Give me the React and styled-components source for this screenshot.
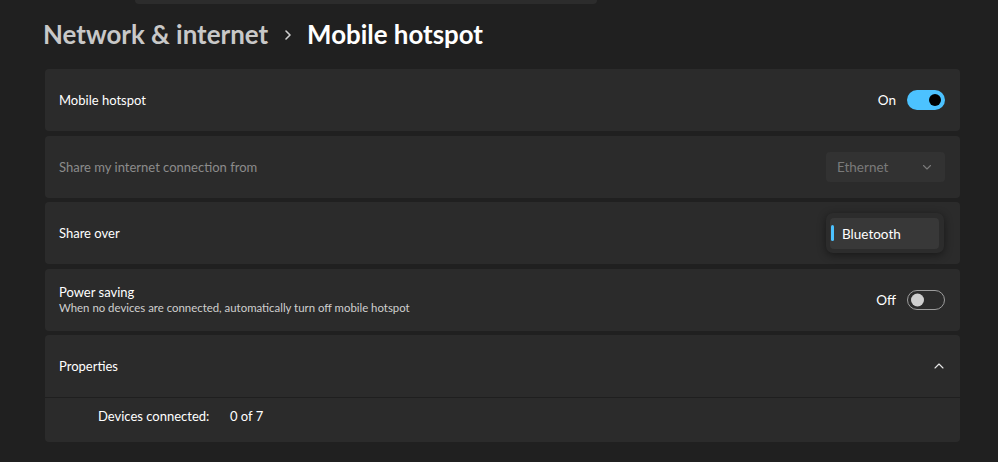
import styled, { createGlobalStyle } from "styled-components";

const GlobalStyle = createGlobalStyle`
  html, body {
    margin: 0;
    padding: 0;
    background: #202020;
  }
  body {
    font-family: Lato, "Noto Sans", sans-serif;
    color: #ffffff;
    -webkit-font-smoothing: antialiased;
  }
`;

const Page = styled.div`
  width: 998px;
  height: 462px;
  overflow: hidden;
  background: #202020;
`;

const SearchStub = styled.div`
  margin-left: 135px;
  width: 462px;
  height: 4px;
  background: #2c2c2c;
  border-radius: 0 0 6px 6px;
`;

const Breadcrumb = styled.h1`
  display: flex;
  align-items: center;
  gap: 14px;
  margin: 0;
  padding: 10px 0 0 43px;
  height: 40px;
  font-size: 25.9px;
  font-weight: 700;
`;

const Crumb = styled.span`
  color: ${(p) => (p.$current ? "#ffffff" : "#c8c8c8")};
`;

const Sep = styled.span`
  display: flex;
  align-items: center;
  margin: 2px 0 0 1px;
`;

const Cards = styled.div`
  display: flex;
  flex-direction: column;
  gap: 4.5px;
  width: 915px;
  margin: 15px 0 0 45px;
`;

const Card = styled.div`
  background: #2b2b2b;
  border-radius: 4px;
`;

const Row = styled.div`
  display: flex;
  align-items: center;
  justify-content: space-between;
  height: 62px;
  padding: 0 15px 0 14px;
  box-sizing: border-box;
`;

const Label = styled.div`
  display: flex;
  flex-direction: column;
  font-size: 13px;
  line-height: 16px;
  color: ${(p) => (p.$disabled ? "#8c8c8c" : "#ffffff")};
`;

const Sub = styled.span`
  font-size: 11.4px;
  line-height: 15px;
  color: #cfcfcf;
`;

const Control = styled.div`
  display: flex;
  align-items: center;
  gap: 11px;
  font-size: 13.5px;
  color: #ffffff;
`;

const Toggle = styled.div`
  position: relative;
  width: 38px;
  height: 20px;
  box-sizing: border-box;
  border-radius: 10px;
  background: ${(p) => (p.$on ? "#4cc2ff" : "transparent")};
  border: ${(p) => (p.$on ? "none" : "1px solid #9c9c9c")};
`;

const Knob = styled.span`
  position: absolute;
  top: 50%;
  width: ${(p) => (p.$on ? "12px" : "13px")};
  height: ${(p) => (p.$on ? "12px" : "13px")};
  border-radius: 50%;
  transform: translateY(-50%);
  background: ${(p) => (p.$on ? "#000000" : "#cecece")};
  ${(p) => (p.$on ? "right: 4px;" : "left: 3px;")}
`;

const Select = styled.div`
  display: flex;
  align-items: center;
  justify-content: space-between;
  width: 119px;
  height: 30px;
  box-sizing: border-box;
  padding: 0 12px 0 11px;
  background: #323232;
  border-radius: 4px;
  color: #7a7a7a;
  font-size: 13.5px;
`;

const Popup = styled.div`
  display: flex;
  width: 118px;
  height: 40px;
  box-sizing: border-box;
  padding: 5px 5px 4px 4px;
  margin-right: 1px;
  background: #2c2c2c;
  border-radius: 7px;
  box-shadow: 0 2px 8px rgba(0, 0, 0, 0.45);
`;

const Option = styled.div`
  position: relative;
  flex: 1;
  display: flex;
  align-items: center;
  padding-left: 12px;
  background: #383838;
  border-radius: 4px;
  font-size: 13.5px;
  color: #ffffff;

  &::before {
    content: "";
    position: absolute;
    left: 1px;
    top: 7px;
    width: 3px;
    height: 16px;
    border-radius: 2px;
    background: #4cc2ff;
  }
`;

const Divider = styled.div`
  height: 1px;
  background: #1f1f1f;
`;

const Details = styled.div`
  display: flex;
  align-items: flex-start;
  height: 44px;
  box-sizing: border-box;
  padding: 10px 0 0 53px;
  font-size: 13px;
  line-height: 16px;
  color: #ffffff;
`;

const DetailKey = styled.span`
  width: 132px;
`;

const Chevron = ({ up }) => (
  <svg width="12" height="12" viewBox="0 0 12 12" fill="none">
    <path
      d={up ? "M2 8 L6 4 L10 8" : "M2.5 4.5 L6 8 L9.5 4.5"}
      stroke={up ? "#e6e6e6" : "#7a7a7a"}
      strokeWidth="1.1"
      strokeLinecap="round"
      strokeLinejoin="round"
    />
  </svg>
);

export default function App() {
  return (
    <Page>
      <GlobalStyle />
      <SearchStub />
      <Breadcrumb>
        <Crumb>Network &amp; internet</Crumb>
        <Sep>
          <svg width="10" height="12" viewBox="0 0 10 12" fill="none">
            <path d="M3 2 L7 6 L3 10" stroke="#d0d0d0" strokeWidth="1.6" strokeLinecap="round" strokeLinejoin="round" />
          </svg>
        </Sep>
        <Crumb $current>Mobile hotspot</Crumb>
      </Breadcrumb>
      <Cards>
        <Card>
          <Row>
            <Label>Mobile hotspot</Label>
            <Control>
              On
              <Toggle $on>
                <Knob $on />
              </Toggle>
            </Control>
          </Row>
        </Card>
        <Card>
          <Row>
            <Label $disabled>Share my internet connection from</Label>
            <Select>
              Ethernet
              <Chevron />
            </Select>
          </Row>
        </Card>
        <Card>
          <Row>
            <Label>Share over</Label>
            <Popup>
              <Option>Bluetooth</Option>
            </Popup>
          </Row>
        </Card>
        <Card>
          <Row>
            <Label>
              Power saving
              <Sub>When no devices are connected, automatically turn off mobile hotspot</Sub>
            </Label>
            <Control>
              Off
              <Toggle>
                <Knob />
              </Toggle>
            </Control>
          </Row>
        </Card>
        <Card>
          <Row>
            <Label>Properties</Label>
            <Chevron up />
          </Row>
          <Divider />
          <Details>
            <DetailKey>Devices connected:</DetailKey>
            <span>0 of 7</span>
          </Details>
        </Card>
      </Cards>
    </Page>
  );
}
